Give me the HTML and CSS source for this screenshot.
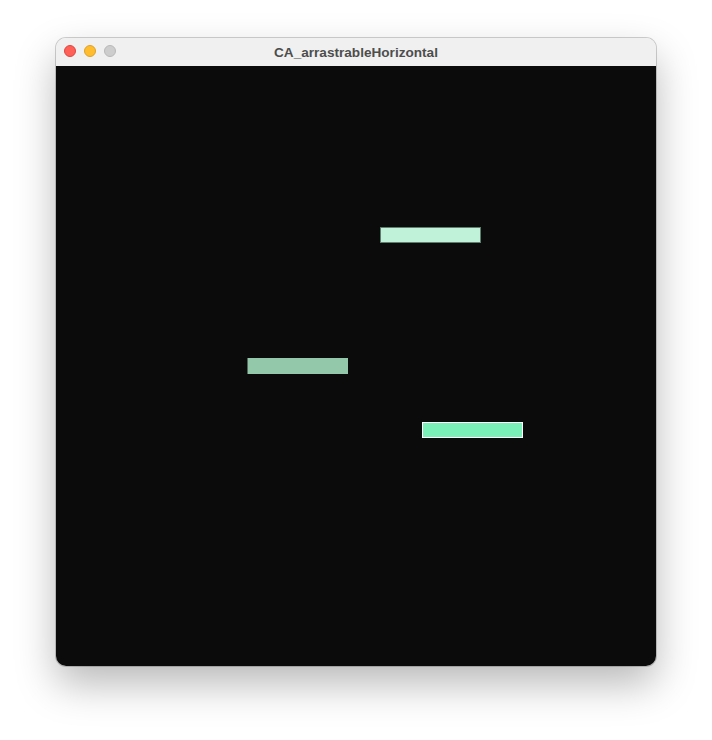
FILE: index.html
```html
<!DOCTYPE html>
<html>
<head>
<meta charset="utf-8">
<link rel="stylesheet" href="styles.css">
</head>
<body>
<div class="page">
  <div class="window">
    <div class="titlebar">
      <div class="lights">
        <span class="light red"></span>
        <span class="light yellow"></span>
        <span class="light gray"></span>
      </div>
      <div class="title">CA_arrastrableHorizontal</div>
    </div>
    <div class="canvas">
      <div class="bar bar1"></div>
      <div class="bar bar2"></div>
      <div class="bar bar3"></div>
    </div>
  </div>
</div>
</body>
</html>
```
FILE: styles.css
```css
html, body {
  margin: 0;
  padding: 0;
  background: #ffffff;
}
.page {
  width: 712px;
  height: 740px;
  padding: 38px 0 0 56px;
  box-sizing: border-box;
}
.window {
  width: 600px;
  border-radius: 10px;
  overflow: hidden;
  box-shadow: 0 0 0 1px rgba(0,0,0,0.18), 0 18px 40px rgba(0,0,0,0.28);
  display: flex;
  flex-direction: column;
}
.titlebar {
  height: 28px;
  background: #f0f0f0;
  position: relative;
  display: flex;
  align-items: center;
  justify-content: center;
}
.lights {
  position: absolute;
  left: 8px;
  top: 7px;
  display: flex;
  gap: 8px;
}
.light {
  width: 12px;
  height: 12px;
  border-radius: 50%;
  box-sizing: border-box;
}
.red { background: #fe5f57; border: 0.5px solid #e0443e; }
.yellow { background: #febc2e; border: 0.5px solid #dea123; }
.gray { background: #cdcdcd; border: 0.5px solid #b8b8b8; }
.title {
  font-family: "Liberation Sans", Arial, sans-serif;
  font-weight: bold;
  font-size: 13.6px;
  color: #4d4d4d;
  margin-left: 0;
}
.canvas {
  position: relative;
  width: 600px;
  height: 600px;
  background: #0b0b0b;
}
.bar {
  position: absolute;
  width: 101px;
  height: 16px;
  box-sizing: border-box;
}
.bar1 {
  left: 324px;
  top: 161px;
  background: #c0f2da;
  border: 1px solid #5f7d6e;
}
.bar2 {
  left: 191px;
  top: 292px;
  background: #93c8aa;
  border-left: 1px solid #4f6a5b;
}
.bar3 {
  left: 366px;
  top: 356px;
  background: #79f0b8;
  border: 1px solid #ffffff;
}
```
